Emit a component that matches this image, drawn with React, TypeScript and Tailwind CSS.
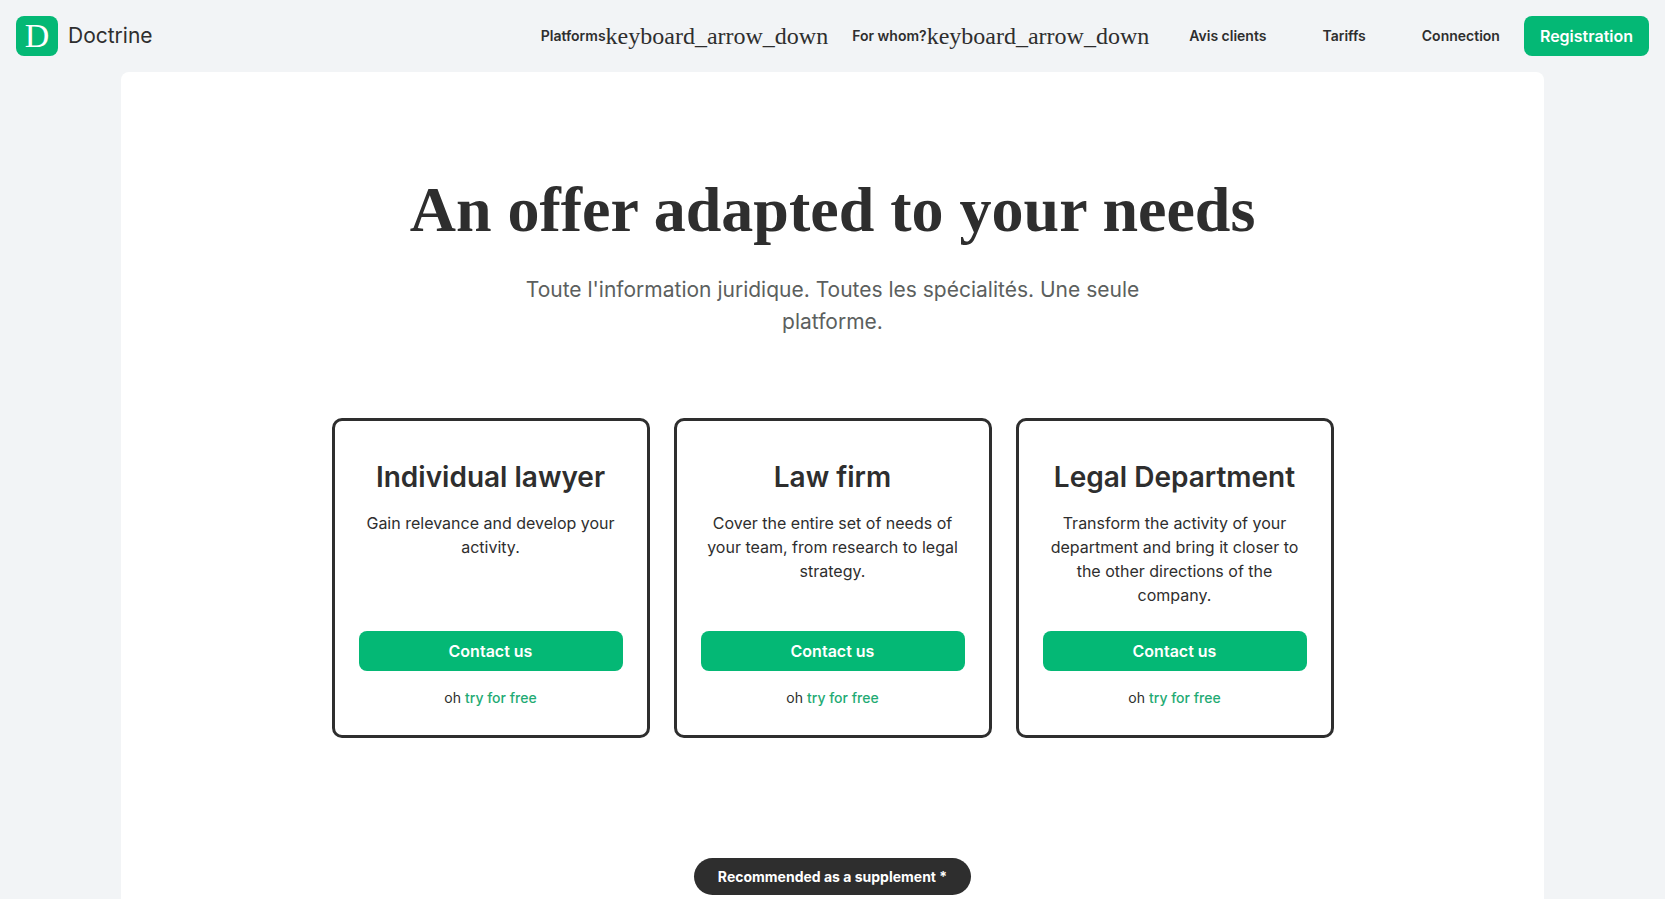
const menus = ["Platforms", "For whom?"];

const links = ["Avis clients", "Tariffs", "Connection"];

const offers = [
  {
    id: 1,
    name: "Individual lawyer",
    desc: "Gain relevance and develop your activity.",
  },
  {
    id: 2,
    name: "Law firm",
    desc: "Cover the entire set of needs of your team, from research to legal strategy.",
  },
  {
    id: 3,
    name: "Legal Department",
    desc: "Transform the activity of your department and bring it closer to the other directions of the company.",
  },
];

function Logo() {
  return (
    <a href="#" className="flex items-center gap-[10px]">
      <span className="flex h-10 w-[42px] items-center justify-center rounded-lg bg-[#04b875] font-['Liberation_Serif',serif] text-[34px] leading-10 text-white">
        D
      </span>
      <span className="text-[21px] leading-8">Doctrine</span>
    </a>
  );
}

function Header() {
  return (
    <header className="flex items-center justify-between p-4">
      <Logo />
      <nav className="flex items-center gap-2">
        <div className="flex items-center gap-6">
          {menus.map((m) => (
            <button key={m} className="flex items-center text-[14px] leading-6 font-semibold">
              {m}
              <span className="font-['Liberation_Serif',serif] text-[24px] font-normal">
                keyboard_arrow_down
              </span>
            </button>
          ))}
          {links.map((l) => (
            <a key={l} href="#" className="px-4 text-[14px] leading-6 font-semibold">
              {l}
            </a>
          ))}
        </div>
        <button className="h-10 rounded-lg bg-[#04b875] px-4 text-[16px] font-semibold text-white">
          Registration
        </button>
      </nav>
    </header>
  );
}

export default function App() {
  return (
    <div className="flex min-h-screen flex-col bg-[#f2f4f6] font-['Inter',sans-serif] text-[#2e2e2e]">
      <Header />

      <main className="mx-[121px] flex grow flex-col items-center rounded-t-lg bg-white pt-[102px]">
        <h1 className="text-center font-['Liberation_Serif',serif] text-[64px] leading-[72px] font-bold">
          An offer adapted to your needs
        </h1>
        <p className="mt-7 max-w-[640px] text-center text-[21px] leading-8 text-[#5c5f5e]">
          Toute l'information juridique. Toutes les spécialités. Une seule platforme.
        </p>

        {/* Offers */}
        <div className="mt-20 grid w-full max-w-[1002px] grid-cols-3 gap-6">
          {offers.map((o) => (
            <section
              key={o.id}
              className="flex flex-col rounded-[10px] border-3 border-[#2e2e2e] px-6 pt-9 pb-[26px] text-center"
            >
              <h2 className="text-[28px] leading-10 font-semibold">{o.name}</h2>
              <p className="mt-3.5 grow text-[16px] leading-6">{o.desc}</p>
              <button className="mt-6 h-10 shrink-0 rounded-lg bg-[#04b875] text-[16px] font-semibold text-white">
                Contact us
              </button>
              <p className="mt-4 text-[14px] leading-[22px]">
                oh{" "}
                <a href="#" className="font-medium text-[#1fab74]">
                  try for free
                </a>
              </p>
            </section>
          ))}
        </div>

        <p className="mt-[120px] mb-1 rounded-full bg-[#2e2e2e] px-6 py-2 text-[14px] leading-[21px] font-bold text-white">
          Recommended as a supplement *
        </p>
      </main>
    </div>
  );
}
